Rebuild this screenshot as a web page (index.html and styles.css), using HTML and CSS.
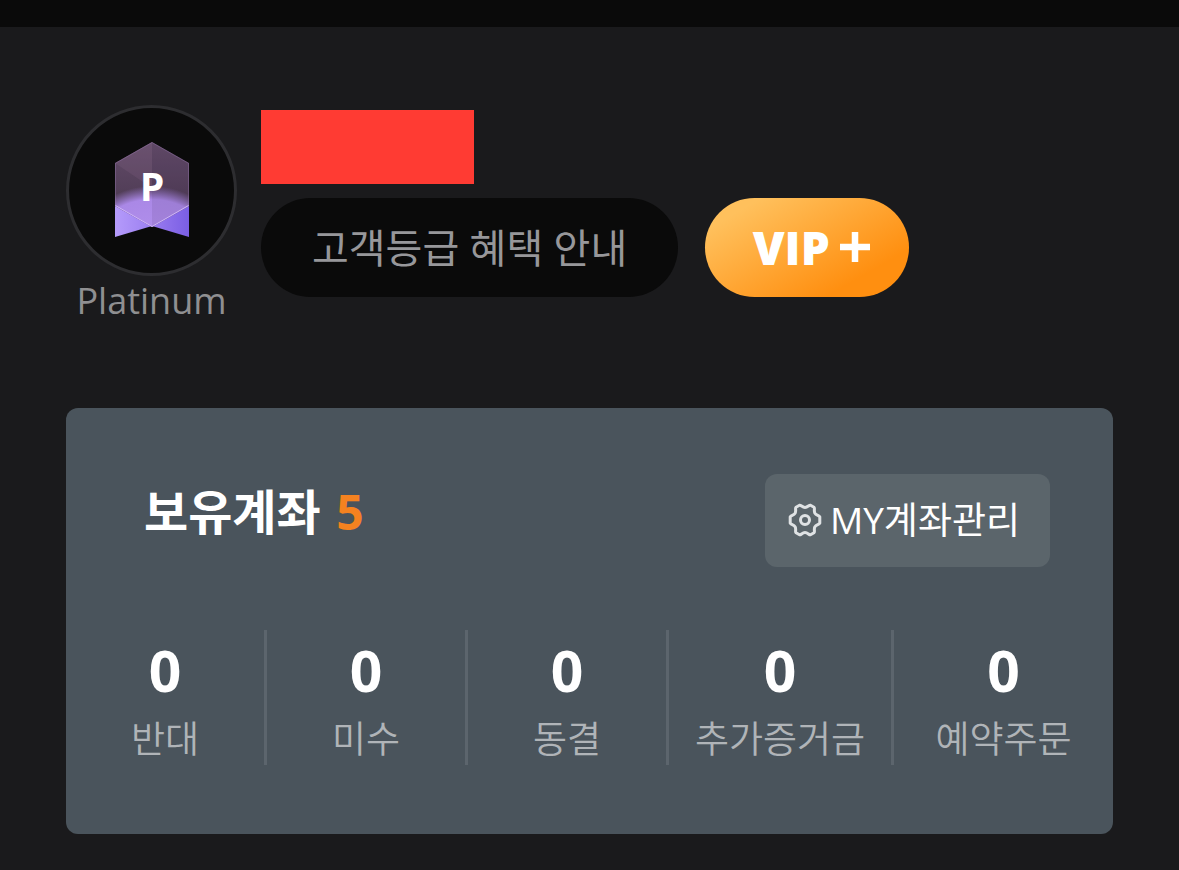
FILE: index.html
```
<!DOCTYPE html>
<html lang="ko">
<head>
<meta charset="utf-8">
<meta name="viewport" content="width=device-width, initial-scale=1">
<title>MY</title>
<link rel="stylesheet" href="styles.css">
</head>
<body>
<main class="page">
    <section class="profile">
        <div class="grade">
            <div class="grade-circle">
                <svg class="grade-icon" viewBox="0 0 74 96" aria-hidden="true">
                    <defs>
                        <linearGradient id="body" x1="0" y1="0" x2="0" y2="1">
                            <stop offset="0" stop-color="#634c69"/>
                            <stop offset="0.6" stop-color="#523e58"/>
                            <stop offset="1" stop-color="#523e58"/>
                        </linearGradient>
                        <radialGradient id="glow" gradientUnits="userSpaceOnUse" cx="37" cy="128" r="84">
                            <stop offset="0" stop-color="#b896f2"/>
                            <stop offset="0.84" stop-color="#aa88e6"/>
                            <stop offset="1" stop-color="#a583e2" stop-opacity="0"/>
                        </radialGradient>
                        <linearGradient id="tail-left" x1="0" y1="0" x2="1" y2="0">
                            <stop offset="0" stop-color="#b59bfb"/>
                            <stop offset="1" stop-color="#9b7ff0"/>
                        </linearGradient>
                        <linearGradient id="tail-right" x1="0" y1="0" x2="1" y2="0">
                            <stop offset="0" stop-color="#9a7cf0"/>
                            <stop offset="1" stop-color="#7a5ee4"/>
                        </linearGradient>
                    </defs>
                    <path d="M0 62 37 84 0 95z" fill="url(#tail-left)"/>
                    <path d="M74 62 37 84l37 11z" fill="url(#tail-right)"/>
                    <path d="M37 0 74 21v43L37 85 0 64V21z" fill="url(#body)"/>
                    <path d="M37 0 74 21v43L37 85 0 64V21z" fill="url(#glow)"/>
                    <path d="M37 0v46L0 21z" fill="#8a6b8c" opacity="0.2"/>
                    <path d="M37 0 74 21v43L37 85z" fill="#3f2b4c" opacity="0.1"/>
                    <path d="M37 .5 73.500 21.300v42.500L37 84.500.5 63.800V21.300z" fill="none" stroke="#a283bd" opacity="0.35"/>
                    <path d="M.5 63.500 37 84.500 73.500 63.500" fill="none" stroke="#cdb4fa"/>
                    <text class="grade-letter" x="37" y="59" text-anchor="middle">P</text>
                </svg>
            </div>
            <span class="grade-name">Platinum</span>
        </div>
        <div class="member">
            <div class="member-name"></div>
            <div class="member-links">
                <button type="button" class="benefit-button">고객등급 혜택 안내</button>
                <button type="button" class="vip-button" aria-label="VIP+">
                    <span>VIP</span>
                    <svg class="plus-icon" viewBox="0 0 30 30" aria-hidden="true">
                        <path d="M15 0v30M0 15h30" fill="none" stroke="#fff" stroke-width="6.500"/>
                    </svg>
                </button>
            </div>
        </div>
    </section>

    <section class="account">
        <div class="account-head">
            <h2 class="account-title">보유계좌 <em>5</em></h2>
            <button type="button" class="manage-button">
                <svg class="gear-icon" viewBox="0 0 34 34" aria-hidden="true">
                    <g fill="none" stroke="#dfe2e4" stroke-width="3" stroke-linejoin="round">
                        <path d="M11.500 2.200C13 1.800 14.200 4.500 17 4.500S21 1.800 22.500 2.200L26 4.200C27.200 5.400 25.500 7.600 26.900 10.200 28.300 12.400 31 12.200 31.800 13.800V20.200C31 21.800 28.300 21.600 26.900 23.800 25.500 26.400 27.200 28.600 26 29.800L22.500 31.800C21 32.200 19.800 29.500 17 29.500S13 32.200 11.500 31.800L8 29.800C6.800 28.600 8.500 26.400 7.100 23.800 5.700 21.600 3 21.800 2.200 20.200V13.800C3 12.200 5.700 12.400 7.100 10.200 8.500 7.600 6.800 5.400 8 4.200z"/>
                        <circle cx="17" cy="17" r="4.500"/>
                    </g>
                </svg>
                <span>MY계좌관리</span>
            </button>
        </div>
        <ul class="status-list">
            <li><strong>0</strong><span>반대</span></li>
            <li><strong>0</strong><span>미수</span></li>
            <li><strong>0</strong><span>동결</span></li>
            <li><strong>0</strong><span>추가증거금</span></li>
            <li><strong>0</strong><span>예약주문</span></li>
        </ul>
    </section>
</main>
</body>
</html>
```
FILE: styles.css
```
* { margin: 0; padding: 0; box-sizing: border-box; }

body {
    background: #1a1a1c;
    border-top: 27px solid #0a0a0a;
    color: #fff;
    font-family: "Noto Sans", "Noto Sans CJK KR", sans-serif;
}

button {
    border: 0;
    color: inherit;
    font-family: inherit;
    cursor: pointer;
}

.page {
    padding: 78px 66px 36px;
}

/* Profile */
.profile {
    display: flex;
    align-items: flex-start;
    gap: 24px;
}

.grade {
    display: flex;
    flex-direction: column;
    align-items: center;
    width: 171px;
}

.grade-circle {
    display: flex;
    align-items: center;
    justify-content: center;
    width: 171px;
    height: 171px;
    padding-bottom: 2px;
    border: 3px solid #2d2d30;
    border-radius: 50%;
    background: #0a0a0a;
}

.grade-icon {
    width: 74px;
    height: 96px;
}

.grade-letter {
    fill: #fff;
    font-size: 39px;
    font-weight: 700;
}

.grade-name {
    color: #8f8f91;
    font-family: "Open Sans", sans-serif;
    font-size: 36px;
    line-height: 50px;
}

.member {
    padding-top: 5px;
}

.member-name {
    width: 213px;
    height: 74px;
    margin-bottom: 14px;
    background: #ff3b33;
}

.member-links {
    display: flex;
    gap: 27px;
}

.benefit-button {
    height: 99px;
    padding: 0 51px 3px;
    border-radius: 50px;
    background: #0a0a0a;
    color: #97979a;
    font-size: 40px;
}

.vip-button {
    display: flex;
    align-items: center;
    justify-content: center;
    gap: 10px;
    width: 204px;
    height: 99px;
    padding: 0 0 2px 8px;
    border-radius: 50px;
    background: linear-gradient(150deg, #ffc05c 15%, #ff8f10 78%);
    font-family: "Open Sans", sans-serif;
    font-size: 46px;
    font-weight: 800;
}

.plus-icon {
    width: 30px;
    height: 30px;
}

/* Account card */
.account {
    margin-top: 82px;
    padding: 66px 0 69px;
    border-radius: 12px;
    background: #4a545c;
}

.account-head {
    display: flex;
    align-items: flex-start;
    justify-content: space-between;
    padding: 0 63px 0 78px;
}

.account-title {
    font-size: 48px;
    font-weight: 700;
    line-height: 76px;
}

.account-title em {
    margin-left: 3px;
    color: #f58220;
    font-style: normal;
}

.manage-button {
    display: flex;
    align-items: center;
    gap: 8px;
    height: 93px;
    padding: 0 30px 2px 23px;
    border-radius: 12px;
    background: #5b656b;
    font-family: "Open Sans", "Noto Sans CJK KR", sans-serif;
    font-size: 37px;
}

.manage-button span {
    padding-bottom: 4px;
}

.gear-icon {
    width: 34px;
    height: 34px;
}

.status-list {
    display: grid;
    grid-template-columns: 67fr 67fr 67fr 75fr 73fr;
    margin-top: 63px;
    list-style: none;
}

.status-list li {
    display: flex;
    flex-direction: column;
    align-items: center;
    height: 135px;
    border-right: 3px solid #5c656d;
}

.status-list li:last-child {
    border-right: 0;
}

.status-list strong {
    font-size: 57px;
    line-height: 80px;
}

.status-list span {
    color: #b0b4b8;
    font-size: 37px;
    font-weight: 350;
    line-height: 58px;
}
```
